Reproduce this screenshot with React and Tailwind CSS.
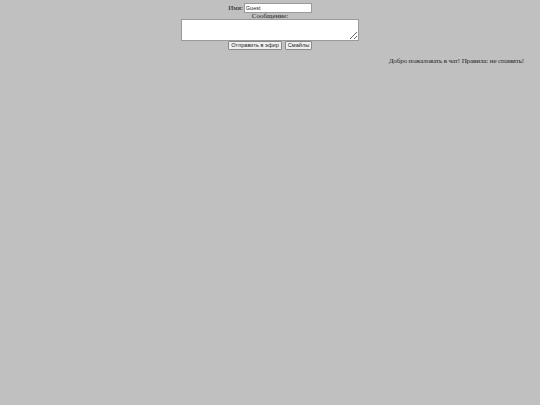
import React from 'react';

export default function App() {
    return (
        <div className="w-[540px] h-[405px] bg-[#c0c0c0] font-['Liberation_Serif',serif] text-[7px] leading-[9px] text-[#222]">
            {/* chat form */}
            <form className="flex flex-col items-center pt-[3px]" onSubmit={e => e.preventDefault()}>
                <div className="flex items-center gap-[1px] h-[10px]">
                    <span>Имя:</span>
                    <input
                        defaultValue="Guest"
                        className="w-[68px] h-[10px] bg-white border border-[#9a9a9a] px-[1px] font-['Liberation_Sans',sans-serif] text-[5.5px] leading-[8px] text-[#222]"
                    />
                </div>
                <div className="h-[7px] leading-[8px] mt-[-1px]">Сообщение:</div>
                <textarea className="w-[178px] h-[22px] bg-white border border-[#9a9a9a] resize-y" />
                <div className="flex gap-[3px]">
                    <button type="button" className="w-[54px] h-[9px] px-0 bg-[#efefef] border border-[#8a8a8a] rounded-[1px] font-['Liberation_Sans',sans-serif] text-[5.6px] leading-[7px] whitespace-nowrap text-[#222]">
                        Отправить в эфир
                    </button>
                    <button type="button" className="w-[27px] h-[9px] px-0 bg-[#efefef] border border-[#8a8a8a] rounded-[1px] font-['Liberation_Sans',sans-serif] text-[5.6px] leading-[7px] text-[#222]">
                        Смайлы
                    </button>
                </div>
            </form>

            {/* messages */}
            <div className="flex justify-end pr-[16px] pt-[7px]">
                <span className="tracking-[-0.1px]">Добро пожаловать в чат! Правила: не спамить!</span>
            </div>
        </div>
    );
}
